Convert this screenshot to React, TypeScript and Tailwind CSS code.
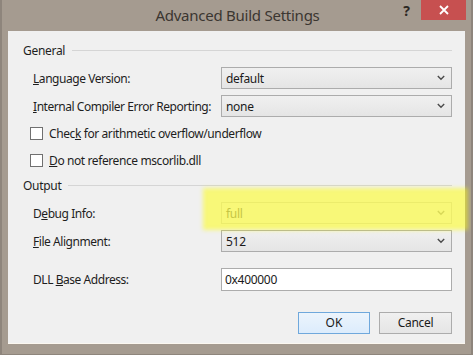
import React from "react";

const font = { fontFamily: '"Noto Sans", "Open Sans", sans-serif' };

function Chevron({ color = "#5a5a5a" }: { color?: string }) {
  return (
    <svg width="8" height="6" viewBox="0 0 8 6" className="shrink-0">
      <path d="M0.8 1 L4 4.2 L7.2 1" fill="none" stroke={color} strokeWidth="1.4" />
    </svg>
  );
}

function Select({ value, disabled = false }: { value: string; disabled?: boolean }) {
  return (
    <div
      className={
        "w-[231px] h-[22px] flex items-center justify-between pl-[4px] pr-[6px] border tracking-[-0.3px] " +
        (disabled
          ? "border-[#d9d9d9] bg-[#f0f0f0] text-[#8a8a8a]"
          : "border-[#acacac] bg-gradient-to-b from-[#f0f0f0] to-[#e5e5e5] text-[#1a1a1a]")
      }
    >
      <span className="pt-px">{value}</span>
      <Chevron color={disabled ? "#b0b0b0" : "#4a4a4a"} />
    </div>
  );
}

function Row({ label, children, className = "" }: { label: React.ReactNode; children: React.ReactNode; className?: string }) {
  return (
    <div className={"flex items-center pl-[25px] " + className}>
      <span className="w-[188px] pt-px whitespace-nowrap text-[#1e1e1e] tracking-[-0.45px]">{label}</span>
      {children}
    </div>
  );
}

function Group({ title, className = "" }: { title: string; className?: string }) {
  return (
    <div className={"flex items-center h-[16px] pl-[15px] " + className}>
      <span className="text-[#1e1e1e] tracking-[-0.3px] pt-px">{title}</span>
      <div className="flex-1 ml-[7px] h-px bg-[#d5d5d5]" />
    </div>
  );
}

function Check({ children, className = "" }: { children: React.ReactNode; className?: string }) {
  return (
    <div className={"flex items-center h-[13px] pl-[22px] " + className}>
      <div className="w-[13px] h-[13px] border border-[#707070] bg-white shrink-0" />
      <span className="ml-[6px] whitespace-nowrap text-[#1e1e1e] tracking-[-0.4px]">{children}</span>
    </div>
  );
}

export default function App() {
  return (
    <div
      className="w-[473px] h-[355px] bg-[#a59b90] flex flex-col border-l-2 border-r-2 border-b border-[#8e857c] overflow-hidden text-[12px] leading-none"
      style={font}
    >
      <div className="h-[31px] flex items-start relative shrink-0">
        <div className="flex-1 text-center text-[15px] text-[#3b3631] pt-[8px] pl-[2px] tracking-[-0.25px]">Advanced Build Settings</div>
        <div className="absolute right-[61px] top-[4px] text-[14px] font-bold text-[#2c2824]">?</div>
        <div className="absolute right-[5px] top-0 w-[45px] h-[20px] bg-[#c75050] flex items-center justify-center">
          <svg width="10" height="10" viewBox="0 0 10 10">
            <path d="M1 1 L9 9 M9 1 L1 9" stroke="white" strokeWidth="1.8" />
          </svg>
        </div>
      </div>
      <div className="mx-[6px] h-[313px] bg-[#f0f0f0] flex flex-col pr-[13px] pt-[11px] relative border-b border-[#fbf7f0]">
        <Group title="General" />
        <Row label={<><u>L</u>anguage Version:</>} className="mt-[9px]">
          <Select value="default" />
        </Row>
        <Row label={<><u>I</u>nternal Compiler Error Reporting:</>} className="mt-[6px]">
          <Select value="none" />
        </Row>
        <Check className="mt-[10px]">
          Chec<u>k</u> for arithmetic overflow/underflow
        </Check>
        <Check className="mt-[14px]">
          <u>D</u>o not reference mscorlib.dll
        </Check>
        <Group title="Output" className="mt-[10px]" />
        <Row label={<>D<u>e</u>bug Info:</>} className="mt-[9px]">
          <Select value="full" disabled />
        </Row>
        <Row label={<><u>F</u>ile Alignment:</>} className="mt-[6px]">
          <Select value="512" />
        </Row>
        <Row label={<>DLL <u>B</u>ase Address:</>} className="mt-[16px]">
          <div className="w-[231px] h-[23px] flex items-center pl-[3px] pt-px border border-[#acacac] bg-white text-[#1a1a1a] tracking-[-0.3px]">0x400000</div>
        </Row>
        <div className="flex justify-end gap-[9px] mt-[21px]">
          <div className="w-[72px] h-[22px] flex items-center justify-center border border-[#6fa8dc] bg-gradient-to-b from-[#ecf4fc] to-[#dcecfc] text-[#1a1a1a]">OK</div>
          <div className="w-[73px] h-[22px] flex items-center justify-center border border-[#acacac] bg-gradient-to-b from-[#f0f0f0] to-[#e5e5e5] text-[#1a1a1a] tracking-[-0.3px]">Cancel</div>
        </div>
        <div className="absolute left-[195px] top-[157px] w-[265px] h-[42px] bg-[rgba(255,255,0,0.5)] blur-[2px] pointer-events-none" />
      </div>
    </div>
  );
}
